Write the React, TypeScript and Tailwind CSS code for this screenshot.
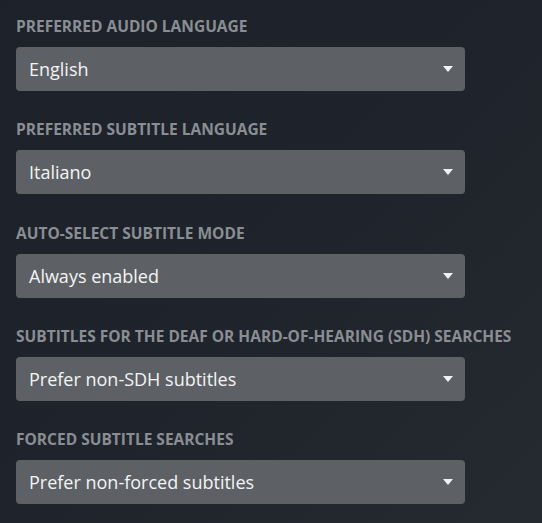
const fields = [
  { label: "Preferred audio language", value: "English" },
  { label: "Preferred subtitle language", value: "Italiano" },
  { label: "Auto-select subtitle mode", value: "Always enabled" },
  { label: "Subtitles for the deaf or hard-of-hearing (SDH) searches", value: "Prefer non-SDH subtitles" },
  { label: "Forced subtitle searches", value: "Prefer non-forced subtitles" },
];

function Caret() {
  return (
    <svg width="10" height="6" viewBox="0 0 10 6" className="shrink-0">
      <path d="M0 0h10L5 6z" fill="#f2f2f2" />
    </svg>
  );
}

export default function App() {
  return (
    <div
      className="min-h-[523px] w-full bg-gradient-to-br from-[#1d2129] via-[#1f232b] to-[#252a31] px-4 pt-[16px] font-['Open_Sans',sans-serif]"
    >
      <div className="flex flex-col gap-[28.25px]">
        {fields.map((f) => (
          <div key={f.label} className="flex flex-col">
            <label className="mb-[11px] text-[15.5px] font-bold uppercase leading-5 text-[#8a8e93]">
              {f.label}
            </label>
            <div className="flex h-[44px] w-[449px] items-center justify-between rounded-[4px] bg-[#5d6166] pl-[13px] pr-[12px]">
              <span className="text-[18px] leading-none text-[#f4f4f4]">{f.value}</span>
              <Caret />
            </div>
          </div>
        ))}
      </div>
    </div>
  );
}
